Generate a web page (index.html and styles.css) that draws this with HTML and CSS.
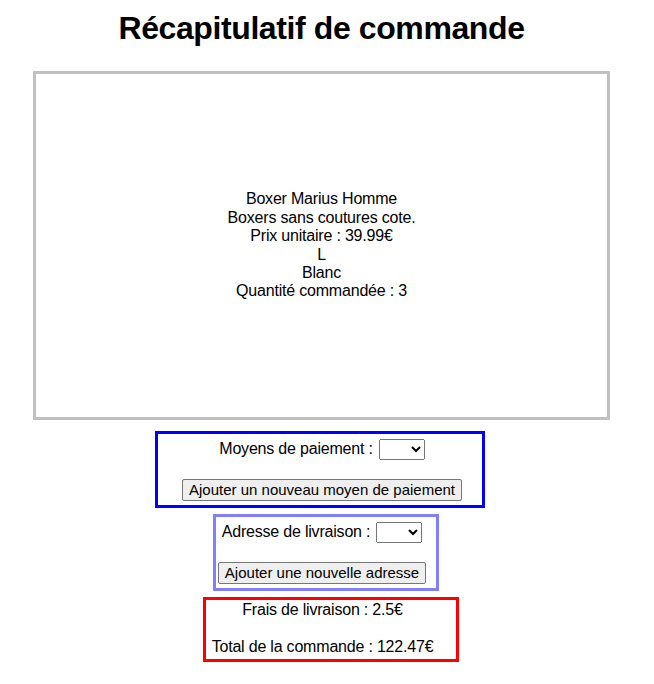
FILE: index.html
```html
<!DOCTYPE html>
<html lang="fr">
<head>
<meta charset="utf-8">
<title>Récapitulatif de commande</title>
<link rel="stylesheet" href="styles.css">
</head>
<body>
<div class="page">
  <h1 class="title">Récapitulatif de commande</h1>
  <div class="product">
    <div>Boxer Marius Homme</div>
    <div>Boxers sans coutures cote.</div>
    <div>Prix unitaire : 39.99€</div>
    <div>L</div>
    <div>Blanc</div>
    <div>Quantité commandée : 3</div>
  </div>
  <div class="box box-payment">
    <div class="row">
      <span>Moyens de paiement :</span>
      <select class="sel"></select>
    </div>
    <button class="btn" type="button">Ajouter un nouveau moyen de paiement</button>
  </div>
  <div class="box box-address">
    <div class="row">
      <span>Adresse de livraison :</span>
      <select class="sel"></select>
    </div>
    <button class="btn" type="button">Ajouter une nouvelle adresse</button>
  </div>
  <div class="box box-total">
    <div class="line">Frais de livraison : 2.5€</div>
    <div class="line">Total de la commande : 122.47€</div>
  </div>
</div>
</body>
</html>
```

FILE: styles.css
```css
html, body {
  margin: 0;
  padding: 0;
  background: #ffffff;
}

body {
  font-family: "Liberation Sans", Arial, sans-serif;
  font-size: 16px;
  letter-spacing: -0.2px;
  color: #000000;
}

.page {
  width: 577px;
  margin-left: 33px;
  padding-top: 10px;
  display: flex;
  flex-direction: column;
  align-items: center;
}

.title {
  margin: 0;
  font-size: 32px;
  line-height: 37px;
  font-weight: bold;
  letter-spacing: -0.4px;
  text-align: center;
}

.product {
  box-sizing: border-box;
  width: 577px;
  height: 349px;
  margin-top: 24px;
  border: 3px solid #c0c0c0;
  display: flex;
  flex-direction: column;
  justify-content: center;
  align-items: center;
  text-align: center;
  line-height: 18.4px;
}

.box {
  box-sizing: border-box;
  border: 3px solid;
  display: flex;
  flex-direction: column;
  align-items: center;
}

.box-payment {
  width: 330px;
  height: 77px;
  margin-top: 11px;
  margin-right: 3px;
  border-color: #0000ff;
  padding: 4px 21px 0 25px;
}

.box-address {
  width: 226px;
  height: 77px;
  margin-top: 6px;
  margin-left: 9px;
  border-color: #8080ff;
  padding: 4px 10px 0 2px;
}

.box-total {
  width: 256px;
  height: 65px;
  margin-top: 6px;
  margin-left: 19px;
  border-color: #ff0000;
  padding: 1px 22px 0 5px;
  gap: 18.4px;
}

.row {
  height: 22px;
  display: flex;
  align-items: center;
  justify-content: center;
  gap: 6px;
  line-height: 18.4px;
}

.sel {
  width: 46px;
  height: 21px;
  margin: 0;
  font-family: "Liberation Sans", Arial, sans-serif;
  font-size: 16px;
}

.btn {
  box-sizing: border-box;
  height: 22px;
  margin: 19px 0 0 0;
  padding: 1px 6px;
  border: 1px solid #767676;
  border-radius: 2px;
  background: #efefef;
  color: #000000;
  font-family: "Liberation Sans", Arial, sans-serif;
  font-size: 15px;
  letter-spacing: 0;
  line-height: 18px;
  white-space: nowrap;
}

.line {
  line-height: 18.4px;
  white-space: nowrap;
}
```
